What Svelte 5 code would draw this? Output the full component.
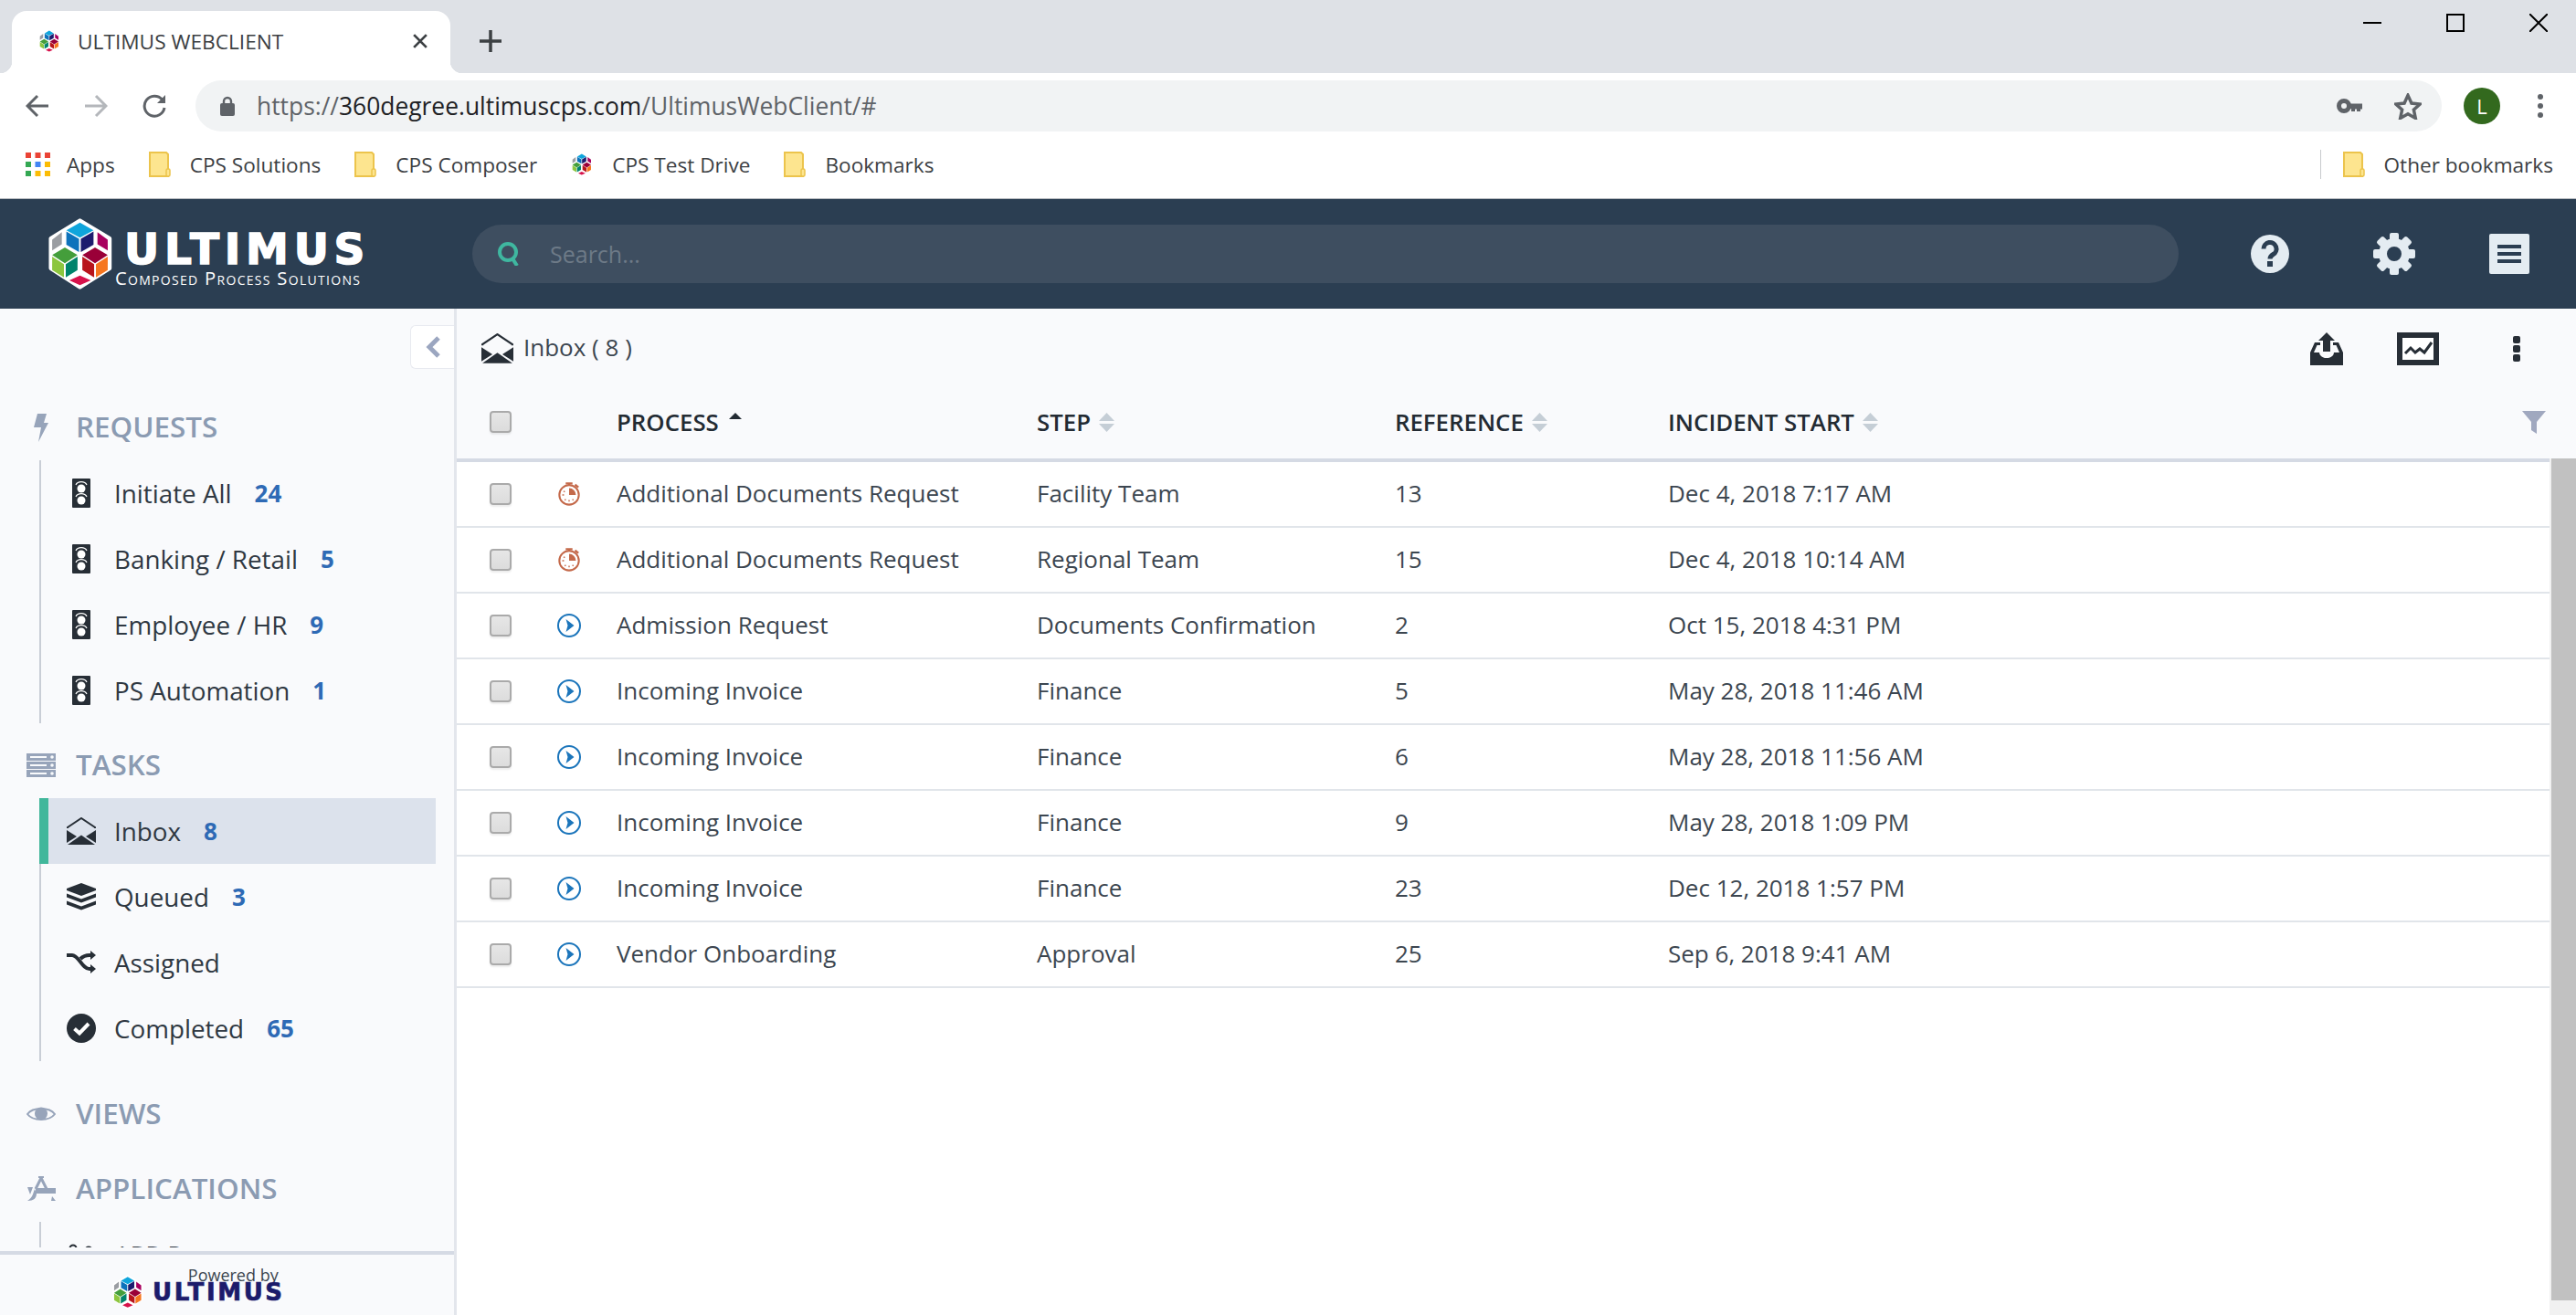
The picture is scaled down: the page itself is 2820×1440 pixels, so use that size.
<script>
  const bookmarks = [
    { name: 'CPS Solutions', icon: 'folder' },
    { name: 'CPS Composer', icon: 'folder' },
    { name: 'CPS Test Drive', icon: 'hex' },
    { name: 'Bookmarks', icon: 'folder' },
  ]

  const appsGrid = [
    '#ea4335', '#ea4335', '#ea4335',
    '#34a853', '#4285f4', '#fbbc05',
    '#34a853', '#fbbc05', '#fbbc05',
  ]

  const requests = [
    { name: 'Initiate All', count: 24 },
    { name: 'Banking / Retail', count: 5 },
    { name: 'Employee / HR', count: 9 },
    { name: 'PS Automation', count: 1 },
  ]

  const tasks = [
    { name: 'Inbox', count: 8, icon: 'inbox', active: true },
    { name: 'Queued', count: 3, icon: 'stack' },
    { name: 'Assigned', icon: 'shuffle' },
    { name: 'Completed', count: 65, icon: 'check' },
  ]

  const rows = [
    { late: true, process: 'Additional Documents Request', step: 'Facility Team', ref: 13, start: 'Dec 4, 2018 7:17 AM' },
    { late: true, process: 'Additional Documents Request', step: 'Regional Team', ref: 15, start: 'Dec 4, 2018 10:14 AM' },
    { process: 'Admission Request', step: 'Documents Confirmation', ref: 2, start: 'Oct 15, 2018 4:31 PM' },
    { process: 'Incoming Invoice', step: 'Finance', ref: 5, start: 'May 28, 2018 11:46 AM' },
    { process: 'Incoming Invoice', step: 'Finance', ref: 6, start: 'May 28, 2018 11:56 AM' },
    { process: 'Incoming Invoice', step: 'Finance', ref: 9, start: 'May 28, 2018 1:09 PM' },
    { process: 'Incoming Invoice', step: 'Finance', ref: 23, start: 'Dec 12, 2018 1:57 PM' },
    { process: 'Vendor Onboarding', step: 'Approval', ref: 25, start: 'Sep 6, 2018 9:41 AM' },
  ]

  const columns = ['STEP', 'REFERENCE', 'INCIDENT START']
  const gearTeeth = [0, 45, 90, 135, 180, 225, 270, 315]
</script>

{#snippet hexLogo()}
  <svg class="hexsvg" viewBox="66 36 211 236">
    <polygon points="170,44 268,103 268,202 170,264 74,202 74,103" fill="#fff" stroke="#fff" stroke-width="14" stroke-linejoin="round" />
    <polygon points="170,50 215,76 170,100 125,76" fill="#0fa5dc" />
    <polygon points="125,80 167,104 167,148 125,124" fill="#0d72bb" />
    <polygon points="173,104 215,80 215,124 173,148" fill="#1d1c6e" />
    <polygon points="78,107 110,82 110,122 78,143" fill="#9a9da2" />
    <polygon points="228,82 262,107 262,143 228,122" fill="#a8005f" />
    <polygon points="120,133 162,158 120,185 78,158" fill="#449e3b" />
    <polygon points="78,163 117,188 117,232 78,208" fill="#8dc63f" />
    <polygon points="123,188 162,163 162,208 123,232" fill="#00836b" />
    <polygon points="220,133 262,158 220,185 178,158" fill="#9a0038" />
    <polygon points="178,163 217,188 217,232 178,208" fill="#b8141b" />
    <polygon points="223,188 262,163 262,208 223,232" fill="#f6761f" />
    <polygon points="170,226 206,242 170,258 135,242" fill="#d7124b" />
  </svg>
{/snippet}

{#snippet folder()}
  <svg class="folder" viewBox="0 0 24 28">
    <path d="M1 1H19L21 3V27H1Z" fill="#fde58f" stroke="#ecc44c" stroke-width="2" />
    <rect x="19" y="19" width="4" height="8" rx="1.5" fill="#fde58f" stroke="#ecc44c" stroke-width="1.5" />
  </svg>
{/snippet}

{#snippet inboxIcon(cls)}
  <svg class={cls} viewBox="0 0 32 30" fill="#272e36">
    <path d="M1 12V11L16 1L31 11V12" fill="none" stroke="#272e36" stroke-width="2" />
    <path d="M0 14L11 21L0 28Z" />
    <path d="M32 14L21 21L32 28Z" />
    <path d="M1 30L16 19.500L31 30Z" />
  </svg>
{/snippet}

{#snippet itemIcon(kind)}
  {#if kind === 'inbox'}
    {@render inboxIcon('ic32')}
  {:else if kind === 'stack'}
    <svg class="ic32" viewBox="0 0 32 30" fill="#272e36">
      <path d="M16 0L32 6V8L16 14L0 8V6Z" />
      <path d="M0 11.500L16 17.500L32 11.500V15.500L16 21.500L0 15.500Z" />
      <path d="M0 19.500L16 25.500L32 19.500V23.500L16 29.500L0 23.500Z" />
    </svg>
  {:else if kind === 'shuffle'}
    <svg class="ic32" viewBox="0 0 32 26" fill="none" stroke="#272e36" stroke-width="4">
      <path d="M0 5H6C13 5 17 20 25 20H28" />
      <path d="M15 9C18 6 21 5 25 5H28" />
      <path d="M26 0L32 5L26 10Z" fill="#272e36" stroke="none" />
      <path d="M26 15L32 20L26 25Z" fill="#272e36" stroke="none" />
    </svg>
  {:else if kind === 'check'}
    <svg class="ic32" viewBox="0 0 32 32">
      <circle cx="16" cy="16" r="16" fill="#272e36" />
      <path d="M8.500 16.500L14 21.500L24 11" fill="none" stroke="#fff" stroke-width="4" />
    </svg>
  {:else}
    <svg class="light" viewBox="0 0 20 32">
      <rect width="20" height="32" rx="1" fill="#272e36" />
      <circle cx="10" cy="11" r="4.500" fill="#fff" />
      <circle cx="10" cy="24" r="4.500" fill="#fff" />
      <path d="M4 7C6 2.500 14 2.500 16 7M4 20C6 15.500 14 15.500 16 20" fill="none" stroke="#fff" stroke-width="1.200" />
    </svg>
  {/if}
{/snippet}

{#snippet sortBoth()}
  <svg class="sort" viewBox="0 0 17 21" fill="#c5ced6">
    <path d="M8.500 0L17 9H0Z" />
    <path d="M0 12H17L8.500 21Z" />
  </svg>
{/snippet}

<div class="page">
  <div class="tabstrip">
    <div class="tab">
      <span class="tabfav">{@render hexLogo()}</span>
      <span class="tabtitle">ULTIMUS WEBCLIENT</span>
      <svg class="tabclose" viewBox="0 0 14 14" fill="none" stroke="#3c4043" stroke-width="2.400">
        <path d="M1 1L13 13M13 1L1 13" />
      </svg>
    </div>
    <svg class="newtab" viewBox="0 0 24 24" fill="none" stroke="#3c4043" stroke-width="3.500">
      <path d="M12 0V24M0 12H24" />
    </svg>
    <div class="winctl">
      <svg viewBox="0 0 20 20" fill="none" stroke="#000" stroke-width="2"><path d="M0 10H20" /></svg>
      <svg viewBox="0 0 20 20" fill="none" stroke="#000" stroke-width="2"><rect x="1" y="1" width="18" height="18" /></svg>
      <svg viewBox="0 0 20 20" fill="none" stroke="#000" stroke-width="2"><path d="M0 0L20 20M20 0L0 20" /></svg>
    </div>
  </div>

  <div class="toolbar">
    <svg class="navbtn" viewBox="0 0 26 26" fill="none" stroke="#5f6368" stroke-width="3">
      <path d="M25 13H3M13 2L2 13L13 24" />
    </svg>
    <svg class="navbtn" viewBox="0 0 26 26" fill="none" stroke="#b4b7bb" stroke-width="3">
      <path d="M1 13H23M13 2L24 13L13 24" />
    </svg>
    <svg class="navbtn" viewBox="0 0 26 26" fill="none" stroke="#5f6368" stroke-width="3">
      <path d="M21.500 6A11 11 0 1 0 24 15" />
      <path d="M25 1V10H16Z" fill="#5f6368" stroke="none" />
    </svg>
    <div class="omnibox">
      <svg class="lock" viewBox="0 0 18 22" fill="#5f6368">
        <path d="M5 9V6A4 4 0 0 1 13 6V9" fill="none" stroke="#5f6368" stroke-width="2.400" />
        <rect x="1" y="8" width="16" height="14" rx="2" />
      </svg>
      <span class="url"><span class="dim">https://</span>360degree.ultimuscps.com<span class="dim">/UltimusWebClient/#</span></span>
      <svg class="key" viewBox="0 0 28 16">
        <circle cx="8" cy="8" r="5.500" fill="none" stroke="#5f6368" stroke-width="5" />
        <path d="M13 5.500H28V11.500H26V14H22V11.500H20V14H16V11H13Z" fill="#5f6368" />
      </svg>
      <svg class="star" viewBox="2 2 26 25" fill="none" stroke="#5f6368" stroke-width="3" stroke-linejoin="miter">
        <path d="M15 4L18.400 11.500L26.500 12.300L20.500 17.700L22.200 25.700L15 21.600L7.800 25.700L9.500 17.700L3.500 12.300L11.600 11.500Z" />
      </svg>
    </div>
    <div class="avatar">L</div>
    <div class="chromemenu"><i></i><i></i><i></i></div>
  </div>

  <div class="bookmarks">
    <svg class="appsicon" viewBox="0 0 27 26">
      {#each appsGrid as fill, i}
        <rect x={(i % 3) * 10.500} y={Math.floor(i / 3) * 10} width="6" height="6" {fill} />
      {/each}
    </svg>
    <span class="bmname appsname">Apps</span>
    {#each bookmarks as bm}
      <div class="bm">
        {#if bm.icon === 'folder'}
          {@render folder()}
        {:else}
          <span class="tabfav">{@render hexLogo()}</span>
        {/if}
        <span class="bmname">{bm.name}</span>
      </div>
    {/each}
    <div class="bmright">
      <div class="bmsep"></div>
      <div class="bm">
        {@render folder()}
        <span class="bmname">Other bookmarks</span>
      </div>
    </div>
  </div>

  <header class="appbar">
    <div class="logo">
      <span class="logohex">{@render hexLogo()}</span>
      <div class="logotext">
        <span class="wordmark">ULTIMUS</span>
        <span class="strap">Composed Process Solutions</span>
      </div>
    </div>
    <div class="search">
      <svg class="searchicon" viewBox="0 0 26 26" fill="none" stroke="#3fb7a0" stroke-width="4">
        <circle cx="12" cy="11" r="9" />
        <path d="M17 18L22 26" />
      </svg>
      <span class="placeholder">Search...</span>
    </div>
    <svg class="help" viewBox="0 0 42 42">
      <circle cx="21" cy="21" r="21" fill="#e4ecf2" />
      <path d="M14 15.500A7 7 0 1 1 24.500 21.500C22 23 21 24 21 26.500" fill="none" stroke="#2b3e52" stroke-width="5" />
      <rect x="18" y="29" width="6" height="6" fill="#2b3e52" />
    </svg>
    <svg class="gear" viewBox="0 0 46 46">
      {#each gearTeeth as deg}
        <rect x="18" y="0" width="10" height="12" rx="2" fill="#e4ecf2" transform="rotate({deg} 23 23)" />
      {/each}
      <circle cx="23" cy="23" r="12.500" fill="none" stroke="#e4ecf2" stroke-width="9" />
    </svg>
    <div class="hamb"><i></i><i></i><i></i></div>
  </header>

  <div class="main">
    <aside class="sidebar">
      <div class="sidescroll">
        <button class="collapse" aria-label="Collapse sidebar">
          <svg viewBox="0 0 16 24" fill="none" stroke="#9ba6c0" stroke-width="5">
            <path d="M14 2L4 12L14 22" />
          </svg>
        </button>

        <div class="heading first">
          <span class="headicon">
            <svg class="bolt" viewBox="0 0 16 31" fill="#97a4ba">
              <path d="M4 0H14L11 10H16L5 31L8 15H0Z" />
            </svg>
          </span>
          REQUESTS
        </div>
        <ul class="list">
          {#each requests as item}
            <li class="item">
              <span class="itemicon">{@render itemIcon('light')}</span>
              <span>{item.name}</span>
              <span class="count">{item.count}</span>
            </li>
          {/each}
        </ul>

        <div class="heading spaced">
          <span class="headicon">
            <svg class="ic32" viewBox="0 0 32 26" fill="#97a4ba">
              {#each [0, 9, 18] as y}
                <rect y={y} width="32" height="8" />
                <rect x="4" y={y + 3} width="18" height="2" fill="#f9fafc" />
                <circle cx="28" cy={y + 4} r="1.800" fill="#f9fafc" />
              {/each}
            </svg>
          </span>
          TASKS
        </div>
        <ul class="list">
          {#each tasks as item}
            <li class="item" class:active={item.active}>
              <span class="itemicon">{@render itemIcon(item.icon)}</span>
              <span>{item.name}</span>
              {#if item.count}<span class="count">{item.count}</span>{/if}
            </li>
          {/each}
        </ul>

        <div class="heading views">
          <span class="headicon">
            <svg class="ic32" viewBox="0 0 32 20">
              <path d="M1 10C7 2 25 2 31 10C25 18 7 18 1 10Z" fill="none" stroke="#97a4ba" stroke-width="2" />
              <circle cx="16" cy="9.500" r="7" fill="#97a4ba" />
            </svg>
          </span>
          VIEWS
        </div>

        <div class="heading spaced">
          <span class="headicon">
            <svg class="ic32" viewBox="0 0 32 28" fill="none" stroke="#97a4ba">
              <path d="M10 14L16 2L22 14" stroke-width="3" />
              <path d="M13 1H19" stroke-width="2" />
              <rect x="10" y="13" width="22" height="6" fill="#97a4ba" stroke="none" />
              <path d="M1 12H7L4 20Z" fill="#97a4ba" stroke="none" />
              <path d="M9 14C7 19 7 23 1 27C8 27 11 24 11 19Z" fill="#97a4ba" stroke="none" />
              <path d="M28 22L32 27H27Z" fill="#97a4ba" stroke="none" />
            </svg>
          </span>
          APPLICATIONS
        </div>
        <ul class="list">
          <li class="item">
            <span class="itemicon">
              <svg class="ic32" viewBox="0 0 32 26" fill="none" stroke="#272e36" stroke-width="2">
                <circle cx="7" cy="6" r="3.500" />
                <circle cx="24" cy="8" r="3.500" />
                <path d="M9 9L14 15" />
              </svg>
            </span>
            <span>APP Requests</span>
          </li>
        </ul>
      </div>

      <div class="poweredby">
        <span class="pbhex">{@render hexLogo()}</span>
        <div class="pbtext">
          <span class="pbline">Powered by</span>
          <span class="pbmark">ULTIMUS</span>
        </div>
      </div>
    </aside>

    <section class="content">
      <div class="panel">
        <div class="panelbar">
          <span class="titleicon">{@render inboxIcon('ic35')}</span>
          <span class="title">Inbox ( 8 )</span>
          <div class="tools">
            <svg class="tool-upload" viewBox="0 0 36 36" fill="#272e36">
              <path d="M18 0L27 9H22V21H14V9H9Z" />
              <path d="M0 36V22L5 11H11V14H7.500L4 22H10C10.500 30 25.500 30 26 22H32L28.500 14H25V11H31L36 22V36Z" />
            </svg>
            <svg class="tool-chart" viewBox="0 0 46 36">
              <rect x="3" y="3" width="40" height="30" fill="#fff" stroke="#272e36" stroke-width="6" />
              <path d="M9 23L15 17L20 22L25 18L30 22L38 11" fill="none" stroke="#272e36" stroke-width="3" />
            </svg>
            <div class="tool-dots"><i></i><i></i><i></i></div>
          </div>
        </div>

        <div class="grid thead">
          <input type="checkbox" class="check" aria-label="Select all" />
          <span></span>
          <span class="th">
            PROCESS
            <svg class="sortup" viewBox="0 0 14 7" fill="#232b33"><path d="M7 0L14 7H0Z" /></svg>
          </span>
          {#each columns as col}
            <span class="th">{col}{@render sortBoth()}</span>
          {/each}
          <svg class="filter" viewBox="0 0 26 25" fill="#a0a8bf">
            <path d="M0 0H26L16 12V25L10 21V12Z" />
          </svg>
        </div>

        <div class="tbody">
          {#each rows as row}
            <div class="grid trow">
              <input type="checkbox" class="check" aria-label="Select row" />
              {#if row.late}
                <svg class="status" viewBox="0 0 26 28">
                  <circle cx="13" cy="15" r="11.500" fill="none" stroke="#c4694a" stroke-width="2.200" />
                  <path d="M13 7V15H21A8 8 0 0 0 13 7Z" fill="#c4694a" />
                  <path d="M9 1.500H17M13 2V4M20 3L24 6" stroke="#c4694a" stroke-width="2.500" fill="none" />
                  <path d="M5 15H7M13 21V23M9 20L8 21.500M17 20L18 21.500M6.500 10.500L8 11.500" stroke="#c4694a" stroke-width="1.500" />
                </svg>
              {:else}
                <svg class="status" viewBox="0 0 26 26">
                  <circle cx="13" cy="13" r="12" fill="none" stroke="#1b75bb" stroke-width="2" />
                  <path d="M9.500 6L18.500 13L9.500 20L11.500 13Z" fill="#1b75bb" />
                </svg>
              {/if}
              <span>{row.process}</span>
              <span>{row.step}</span>
              <span>{row.ref}</span>
              <span>{row.start}</span>
            </div>
          {/each}
        </div>
      </div>
      <div class="gutter">
        <div class="track"><div class="thumb"></div></div>
      </div>
    </section>
  </div>
</div>

<style>
  :global(body) {
    margin: 0;
    font-family: 'Open Sans', sans-serif;
  }
  i {
    display: block;
  }
  svg {
    display: block;
    flex: none;
  }

  .page {
    width: 2820px;
    height: 1440px;
    display: flex;
    flex-direction: column;
    overflow: hidden;
    background: #fff;
    color: #3c4650;
  }

  /* browser chrome */
  .tabstrip {
    height: 80px;
    box-sizing: border-box;
    padding: 12px 0 0 13px;
    background: #dee1e6;
    display: flex;
    align-items: flex-start;
  }
  .tab {
    position: relative;
    width: 480px;
    height: 68px;
    box-sizing: border-box;
    padding: 0 24px 2px 29px;
    background: #fff;
    border-radius: 16px 16px 0 0;
    display: flex;
    align-items: center;
  }
  .tab::before,
  .tab::after {
    content: '';
    position: absolute;
    bottom: 0;
    width: 13px;
    height: 13px;
  }
  .tab::before {
    left: -13px;
    background: radial-gradient(circle at 0 0, transparent 13px, #fff 13.5px);
  }
  .tab::after {
    right: -13px;
    background: radial-gradient(circle at 100% 0, transparent 13px, #fff 13.5px);
  }
  .tabfav {
    width: 24px;
    height: 26px;
    flex: none;
  }
  .hexsvg {
    width: 100%;
    height: 100%;
  }
  .tabtitle {
    margin-left: 19px;
    font-size: 22.700px;
    color: #3c4043;
    white-space: nowrap;
  }
  .tabclose {
    width: 16px;
    height: 16px;
    margin-left: auto;
    margin-right: 1px;
  }
  .newtab {
    width: 24px;
    height: 24px;
    margin: 21px 0 0 32px;
  }
  .winctl {
    margin-left: auto;
    padding: 3px 31px 0 0;
    display: flex;
    gap: 71px;
  }
  .winctl svg {
    width: 20px;
    height: 20px;
  }

  .toolbar {
    height: 74px;
    box-sizing: border-box;
    padding: 8px 0 10px 28px;
    display: flex;
    align-items: center;
  }
  .navbtn {
    width: 26px;
    height: 26px;
    margin-right: 38px;
  }
  .navbtn:nth-child(3) {
    margin-right: 32px;
  }
  .omnibox {
    width: 2459px;
    height: 56px;
    box-sizing: border-box;
    padding: 0 22px 0 26px;
    border-radius: 28px;
    background: #f1f3f4;
    display: flex;
    align-items: center;
  }
  .lock {
    width: 18px;
    height: 22px;
    margin-right: 23px;
  }
  .url {
    font-size: 26.400px;
    color: #202124;
    white-space: nowrap;
  }
  .dim {
    color: #5f6368;
  }
  .key {
    width: 28px;
    height: 16px;
    margin-left: auto;
    margin-right: 35px;
  }
  .star {
    width: 30px;
    height: 29px;
  }
  .avatar {
    width: 40px;
    height: 40px;
    margin-left: 24px;
    border-radius: 50%;
    background: #33691e;
    color: #fff;
    font-size: 22px;
    line-height: 40px;
    text-align: center;
  }
  .chromemenu {
    margin-left: 41px;
    display: flex;
    flex-direction: column;
    gap: 4px;
  }
  .chromemenu i {
    width: 6px;
    height: 6px;
    border-radius: 50%;
    background: #5f6368;
  }

  .bookmarks {
    height: 64px;
    box-sizing: border-box;
    padding: 0 25px 11px 28px;
    border-bottom: 1px solid #b8bbc0;
    display: flex;
    align-items: center;
  }
  .appsicon {
    width: 27px;
    height: 26px;
  }
  .bmname {
    font-size: 22.600px;
    color: #3c4043;
    white-space: nowrap;
  }
  .appsname {
    margin: 0 37px 0 18px;
  }
  .bm {
    display: flex;
    align-items: center;
    gap: 21px;
    margin-right: 37px;
  }
  .folder {
    width: 24px;
    height: 28px;
  }
  .bmright {
    margin-left: auto;
    display: flex;
    align-items: center;
  }
  .bmright .bm {
    margin-right: 0;
  }
  .bmsep {
    width: 1px;
    height: 32px;
    margin-right: 24px;
    background: #c8cacd;
  }

  /* app header */
  .appbar {
    height: 120px;
    flex: none;
    background: #2b3e52;
    display: flex;
    align-items: center;
    padding-right: 51px;
  }
  .logo {
    width: 464px;
    margin-left: 53px;
    flex: none;
    display: flex;
    align-items: center;
  }
  .logohex {
    width: 70px;
    height: 78px;
    flex: none;
  }
  .logotext {
    margin: 12px 0 0 13px;
    display: flex;
    flex-direction: column;
    color: #fff;
  }
  .wordmark {
    font-family: 'DejaVu Sans', sans-serif;
    font-weight: 700;
    font-size: 47px;
    letter-spacing: 5.800px;
    line-height: 40px;
    -webkit-text-stroke: 1.500px #fff;
  }
  .strap {
    margin-left: -10px;
    font-variant: small-caps;
    font-size: 20.200px;
    letter-spacing: 1.300px;
    line-height: 22px;
    white-space: nowrap;
  }
  .search {
    flex: 1;
    height: 64px;
    padding-left: 27px;
    border-radius: 32px;
    background: #3e4e60;
    display: flex;
    align-items: center;
  }
  .searchicon {
    width: 26px;
    height: 26px;
  }
  .placeholder {
    margin-left: 32px;
    font-size: 25px;
    color: #6d7a87;
  }
  .help {
    width: 42px;
    height: 42px;
    margin-left: 79px;
  }
  .gear {
    width: 46px;
    height: 46px;
    margin-left: 92px;
  }
  .hamb {
    width: 44px;
    height: 44px;
    margin-left: 81px;
    box-sizing: border-box;
    padding: 12px 9px;
    border-radius: 2px;
    background: #e4ecf2;
    display: flex;
    flex-direction: column;
    justify-content: space-between;
  }
  .hamb i {
    height: 4px;
    background: #2b3e52;
  }

  .main {
    flex: 1;
    min-height: 0;
    display: flex;
  }

  /* sidebar */
  .sidebar {
    width: 500px;
    flex: none;
    box-sizing: border-box;
    border-right: 3px solid #e3e6ec;
    background: #f9fafc;
    display: flex;
    flex-direction: column;
  }
  .sidescroll {
    position: relative;
    height: 1028px;
    flex: none;
    overflow: hidden;
  }
  .collapse {
    position: absolute;
    top: 18px;
    right: 0;
    width: 48px;
    height: 48px;
    padding: 0;
    border: 1px solid #e8eaf0;
    border-right: 0;
    border-radius: 6px 0 0 6px;
    background: #fff;
    display: flex;
    align-items: center;
    justify-content: center;
  }
  .collapse svg {
    width: 16px;
    height: 24px;
  }
  .heading {
    height: 72px;
    box-sizing: border-box;
    padding: 0 0 3px 29px;
    display: flex;
    align-items: center;
    font-size: 31.400px;
    font-weight: 600;
    color: #8b9bb2;
  }
  .heading.first {
    margin-top: 94px;
  }
  .heading.spaced {
    margin-top: 10px;
  }
  .heading.views {
    margin-top: 22px;
  }
  .headicon {
    width: 32px;
    margin: 3px 22px 0 0;
    display: flex;
    justify-content: center;
  }
  .bolt {
    width: 16px;
    height: 31px;
  }
  .ic32 {
    width: 32px;
  }
  .ic35 {
    width: 35px;
  }
  .list {
    margin: 0 20px 0 43px;
    padding: 0;
    list-style: none;
    border-left: 2px solid #c9ced6;
  }
  .item {
    height: 72px;
    padding-left: 26px;
    display: flex;
    align-items: center;
    font-size: 27.800px;
    color: #2f3842;
    white-space: nowrap;
  }
  .item.active {
    margin-left: -2px;
    padding-left: 18px;
    border-left: 10px solid #41b79b;
    background: #dce2ec;
  }
  .itemicon {
    width: 36px;
    margin-right: 18px;
    display: flex;
    justify-content: center;
  }
  .light {
    width: 20px;
    height: 32px;
  }
  .count {
    margin-left: 25px;
    font-size: 26px;
    font-weight: 700;
    color: #2e6ab5;
  }
  .poweredby {
    margin-top: 4px;
    flex: 1;
    border-top: 4px solid #d5dae4;
    box-sizing: border-box;
    padding: 12px 0 0 123px;
    display: flex;
  }
  .pbhex {
    width: 34px;
    height: 38px;
    margin-top: 10px;
    flex: none;
  }
  .pbtext {
    margin-left: 10px;
    display: flex;
    flex-direction: column;
    align-items: flex-end;
  }
  .pbline {
    padding-right: 7px;
    font-size: 18px;
    line-height: 20px;
    color: #3c4650;
  }
  .pbmark {
    font-family: 'DejaVu Sans', sans-serif;
    font-weight: 700;
    font-size: 26px;
    letter-spacing: 2.600px;
    line-height: 19px;
    color: #1c1b6b;
    -webkit-text-stroke: 0.700px #1c1b6b;
  }

  /* inbox table */
  .content {
    flex: 1;
    min-width: 0;
    display: flex;
    background: #f9fafc;
  }
  .panel {
    flex: 1;
    min-width: 0;
    display: flex;
    flex-direction: column;
  }
  .panelbar {
    height: 92px;
    box-sizing: border-box;
    padding: 0 32px 5px 27px;
    display: flex;
    align-items: center;
  }
  .titleicon {
    margin-right: 11px;
  }
  .title {
    margin-top: -3px;
    font-size: 26px;
    color: #3c4650;
  }
  .tools {
    margin-left: auto;
    display: flex;
    align-items: center;
  }
  .tool-upload {
    width: 36px;
    height: 36px;
  }
  .tool-chart {
    width: 46px;
    height: 36px;
    margin-left: 59px;
  }
  .tool-dots {
    margin-left: 81px;
    display: flex;
    flex-direction: column;
    gap: 2px;
  }
  .tool-dots i {
    width: 8px;
    height: 8px;
    border-radius: 2px;
    background: #272e36;
  }
  .grid {
    display: grid;
    grid-template-columns: 100px 75px 460px 392px 299px 1fr auto;
    align-items: center;
  }
  .thead {
    height: 76px;
    box-sizing: border-box;
    padding-bottom: 8px;
    border-bottom: 4px solid #d5dae4;
  }
  .th {
    display: flex;
    align-items: center;
    font-size: 25.800px;
    font-weight: 600;
    color: #232b33;
  }
  .sortup {
    width: 14px;
    height: 7px;
    margin: -14px 0 0 11px;
  }
  .sort {
    width: 17px;
    height: 21px;
    margin-left: 9px;
  }
  .filter {
    width: 26px;
    height: 25px;
    margin-right: 4px;
  }
  .check {
    appearance: none;
    width: 24px;
    height: 24px;
    margin: 0 0 0 36px;
    box-sizing: border-box;
    border: 2px solid #aaa;
    border-radius: 4px;
    background: linear-gradient(#e6e6e6, #dcdcdc);
    box-shadow: 0 2px 2px rgba(0, 0, 0, 0.08);
  }
  .tbody {
    flex: 1;
    background: #fff;
  }
  .trow {
    height: 72px;
    box-sizing: border-box;
    padding-bottom: 1px;
    border-bottom: 2px solid #e1e5ea;
    font-size: 26px;
    color: #3c4650;
    white-space: nowrap;
  }
  .trow span {
    margin-top: -2px;
  }
  .status {
    width: 26px;
    height: 26px;
    margin-left: 10px;
  }
  .gutter {
    width: 29px;
    flex: none;
    padding-top: 164px;
    box-sizing: border-box;
    display: flex;
  }
  .track {
    flex: 1;
    padding-left: 2px;
    background: #f1f1f1;
  }
  .thumb {
    height: 922px;
    background: #c1c1c1;
  }
</style>
